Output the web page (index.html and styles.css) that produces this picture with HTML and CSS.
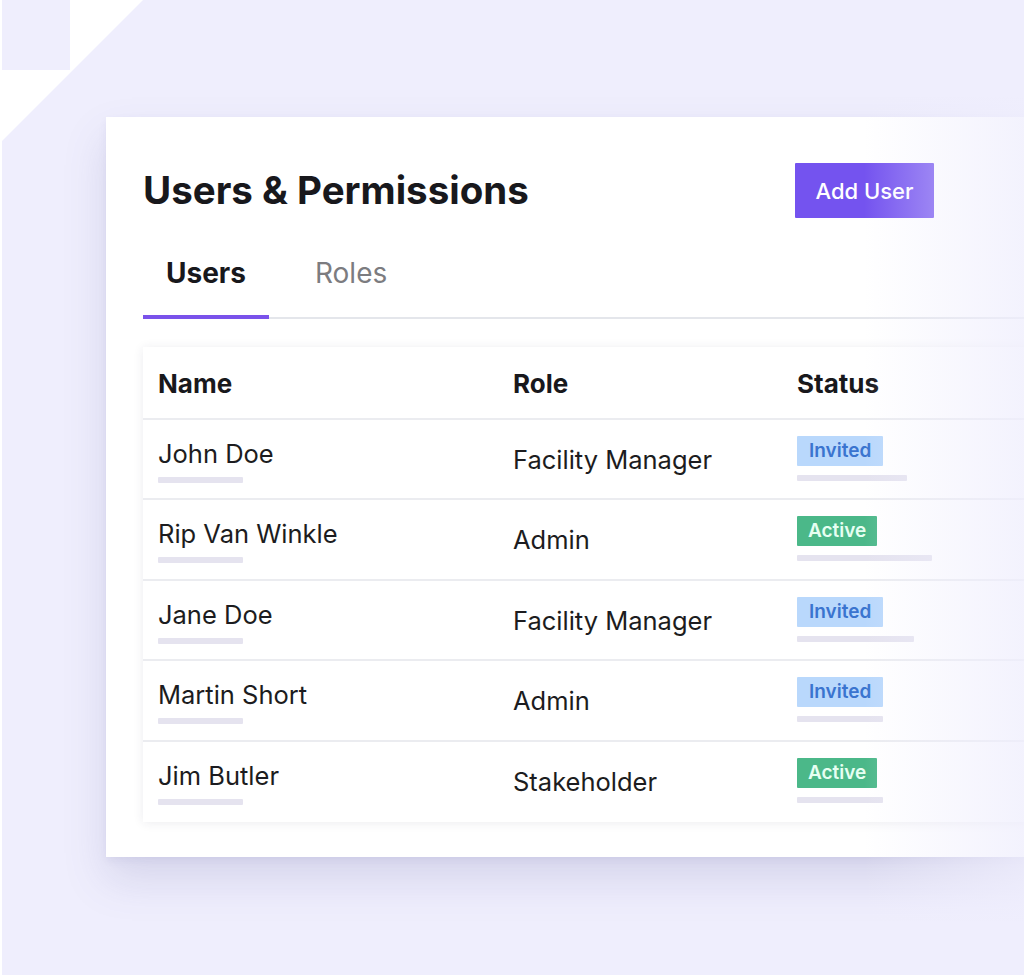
FILE: index.html
```html
<!DOCTYPE html>
<html lang="en">
<head>
<meta charset="utf-8">
<title>Users &amp; Permissions</title>
<link rel="stylesheet" href="styles.css">
</head>
<body>
<div class="page">
  <svg class="deco" width="142" height="142" viewBox="0 0 142 142" aria-hidden="true">
    <polygon points="0,0 141,0 0,141" fill="#ffffff"/>
    <rect x="0" y="0" width="68" height="70" fill="#efeefd"/>
  </svg>

  <section class="card">
    <header class="card-head">
      <h1 class="title">Users &amp; Permissions</h1>
      <button class="btn-add">Add User</button>
    </header>

    <nav class="tabs">
      <span class="tab tab-active">Users</span>
      <span class="tab">Roles</span>
    </nav>

    <div class="table">
      <div class="row row-head">
        <div class="th">Name</div>
        <div class="th">Role</div>
        <div class="th">Status</div>
      </div>

      <div class="row">
        <div class="cell-name"><div class="name">John Doe</div><div class="bar bar-name"></div></div>
        <div class="cell-role">Facility Manager</div>
        <div class="cell-status"><span class="badge badge-invited">Invited</span><div class="bar" style="width:110px"></div></div>
      </div>

      <div class="row">
        <div class="cell-name"><div class="name">Rip Van Winkle</div><div class="bar bar-name"></div></div>
        <div class="cell-role">Admin</div>
        <div class="cell-status"><span class="badge badge-active">Active</span><div class="bar" style="width:135px"></div></div>
      </div>

      <div class="row">
        <div class="cell-name"><div class="name">Jane Doe</div><div class="bar bar-name"></div></div>
        <div class="cell-role">Facility Manager</div>
        <div class="cell-status"><span class="badge badge-invited">Invited</span><div class="bar" style="width:117px"></div></div>
      </div>

      <div class="row">
        <div class="cell-name"><div class="name">Martin Short</div><div class="bar bar-name"></div></div>
        <div class="cell-role">Admin</div>
        <div class="cell-status"><span class="badge badge-invited">Invited</span><div class="bar" style="width:86px"></div></div>
      </div>

      <div class="row">
        <div class="cell-name"><div class="name">Jim Butler</div><div class="bar bar-name"></div></div>
        <div class="cell-role">Stakeholder</div>
        <div class="cell-status"><span class="badge badge-active">Active</span><div class="bar" style="width:86px"></div></div>
      </div>
    </div>
  </section>

  <div class="fade" aria-hidden="true"></div>
</div>
</body>
</html>
```

FILE: styles.css
```css
* { box-sizing: border-box; }

html, body {
  margin: 0;
  padding: 0;
}

body {
  font-family: "Inter", "Noto Sans", "Liberation Sans", sans-serif;
  color: #1c1c20;
  background: #efeefd;
}

.page {
  position: relative;
  width: 1024px;
  height: 975px;
  overflow: hidden;
  background: #efeefd;
  border-left: 2px solid #ffffff;
  padding-top: 117px;
}

.deco {
  position: absolute;
  left: 0;
  top: 0;
  display: block;
}

.card {
  position: relative;
  margin-left: 104px;
  width: 1000px;
  background: #ffffff;
  padding: 46px 0 35px 37px;
  box-shadow: 0 22px 40px rgba(90, 88, 150, 0.17), 0 4px 8px rgba(90, 88, 150, 0.07);
}

.card-head {
  display: grid;
  grid-template-columns: 652px auto;
  align-items: center;
  justify-content: start;
  height: 55px;
}

.title {
  margin: 0;
  font-size: 38.5px;
  line-height: 47px;
  font-weight: 700;
  color: #18181c;
}

.btn-add {
  width: 139px;
  height: 55px;
  border: 0;
  border-radius: 1px;
  background: #7453ef;
  color: #ffffff;
  font-family: inherit;
  font-size: 22px;
  font-weight: 500;
  padding: 0;
}

.tabs {
  display: flex;
  gap: 23px;
  margin-top: 38px;
  border-bottom: 2px solid #e4e6eb;
}

.tab {
  padding: 0 23px 25px;
  font-size: 28px;
  line-height: 34px;
  color: #7c7c80;
  border-bottom: 4px solid transparent;
  margin-bottom: -2px;
}

.tab-active {
  font-weight: 700;
  color: #18181c;
  border-bottom-color: #7a52ea;
}

.table {
  margin-top: 28px;
  background: #ffffff;
  box-shadow: 0 1px 10px rgba(40, 40, 80, 0.09);
}

.row {
  display: grid;
  grid-template-columns: 355px 284px 1fr;
  padding-left: 15px;
  height: 80.6px;
  border-top: 2px solid #ebecf0;
}

.row:last-child {
  height: 82px;
}

.row-head {
  height: 70.5px;
  border-top: 0;
  padding-top: 22px;
}

.th {
  font-size: 26px;
  line-height: 30px;
  font-weight: 700;
  color: #18181c;
}

.cell-name {
  padding-top: 19px;
}

.name,
.cell-role {
  font-size: 25.5px;
  line-height: 30px;
  color: #1c1c20;
}

.cell-role {
  padding-top: 25px;
}

.cell-status {
  padding-top: 16px;
}

.bar {
  height: 6px;
  border-radius: 1px;
  background: #e5e3ef;
}

.bar-name {
  width: 85px;
  margin-top: 8px;
}

.cell-status .bar {
  margin-top: 9px;
}

.badge {
  display: inline-block;
  height: 30px;
  line-height: 30px;
  padding: 0 12px;
  font-size: 19px;
  font-weight: 600;
  border-radius: 1px;
  vertical-align: top;
}

.badge-invited {
  background: #b9d8fc;
  color: #3a74cf;
}

.badge-active {
  background: #4bb889;
  color: #e6fff2;
  padding: 0 11px;
}

.fade {
  position: absolute;
  top: 0;
  right: 0;
  width: 160px;
  height: 100%;
  background: linear-gradient(to right, rgba(239, 238, 253, 0), rgba(239, 238, 253, 0.75));
  pointer-events: none;
}
```
